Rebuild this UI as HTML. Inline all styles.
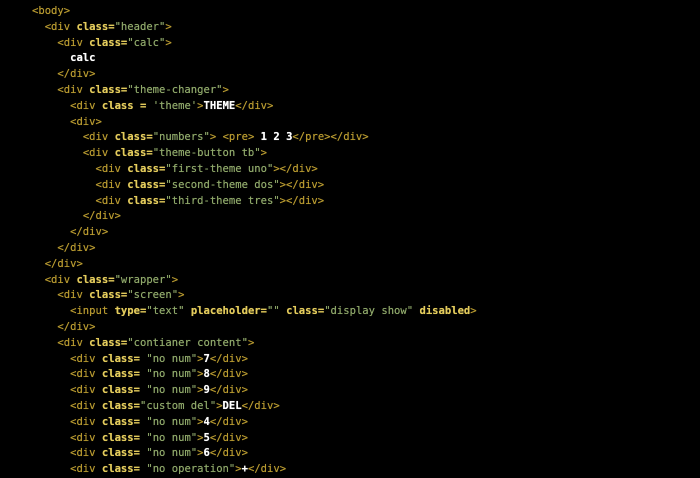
<!DOCTYPE html>
<html><head><meta charset="utf-8"><style>
html,body{margin:0;padding:0;background:#000;width:700px;height:468px;overflow:hidden}
pre{margin:0;position:absolute;left:32px;top:4px;font-family:"DejaVu Sans Mono","Liberation Mono",monospace;font-size:10.55px;line-height:15.8px;color:#fff;white-space:pre;text-shadow:0 0 0.4px currentColor}
.t{color:#b89a30}
.a{color:#e3cb5c;font-weight:bold}
.s{color:#8fa86a}
.w{color:#fff;font-weight:bold;text-shadow:0 0 0.5px #fff}
</style></head><body><pre><span class="t">&lt;body&gt;</span>
  <span class="t">&lt;div</span> <span class="a">class</span><span class="a">=</span><span class="s">"header"</span><span class="t">&gt;</span>
    <span class="t">&lt;div</span> <span class="a">class</span><span class="a">=</span><span class="s">"calc"</span><span class="t">&gt;</span>
      <span class="w">calc</span>
    <span class="t">&lt;/div&gt;</span>
    <span class="t">&lt;div</span> <span class="a">class</span><span class="a">=</span><span class="s">"theme-changer"</span><span class="t">&gt;</span>
      <span class="t">&lt;div</span> <span class="a">class</span> <span class="a">=</span> <span class="s">'theme'</span><span class="t">&gt;</span><span class="w">THEME</span><span class="t">&lt;/div&gt;</span>
      <span class="t">&lt;div&gt;</span>
        <span class="t">&lt;div</span> <span class="a">class</span><span class="a">=</span><span class="s">"numbers"</span><span class="t">&gt;</span> <span class="t">&lt;pre&gt;</span> <span class="w">1 2 3</span><span class="t">&lt;/pre&gt;&lt;/div&gt;</span>
        <span class="t">&lt;div</span> <span class="a">class</span><span class="a">=</span><span class="s">"theme-button tb"</span><span class="t">&gt;</span>
          <span class="t">&lt;div</span> <span class="a">class</span><span class="a">=</span><span class="s">"first-theme uno"</span><span class="t">&gt;&lt;/div&gt;</span>
          <span class="t">&lt;div</span> <span class="a">class</span><span class="a">=</span><span class="s">"second-theme dos"</span><span class="t">&gt;&lt;/div&gt;</span>
          <span class="t">&lt;div</span> <span class="a">class</span><span class="a">=</span><span class="s">"third-theme tres"</span><span class="t">&gt;&lt;/div&gt;</span>
        <span class="t">&lt;/div&gt;</span>
      <span class="t">&lt;/div&gt;</span>
    <span class="t">&lt;/div&gt;</span>
  <span class="t">&lt;/div&gt;</span>
  <span class="t">&lt;div</span> <span class="a">class</span><span class="a">=</span><span class="s">"wrapper"</span><span class="t">&gt;</span>
    <span class="t">&lt;div</span> <span class="a">class</span><span class="a">=</span><span class="s">"screen"</span><span class="t">&gt;</span>
      <span class="t">&lt;input</span> <span class="a">type</span><span class="a">=</span><span class="s">"text"</span> <span class="a">placeholder</span><span class="a">=</span><span class="s">""</span> <span class="a">class</span><span class="a">=</span><span class="s">"display show"</span> <span class="a">disabled</span><span class="t">&gt;</span>
    <span class="t">&lt;/div&gt;</span>
    <span class="t">&lt;div</span> <span class="a">class</span><span class="a">=</span><span class="s">"contianer content"</span><span class="t">&gt;</span>
      <span class="t">&lt;div</span> <span class="a">class</span><span class="a">=</span> <span class="s">"no num"</span><span class="t">&gt;</span><span class="w">7</span><span class="t">&lt;/div&gt;</span>
      <span class="t">&lt;div</span> <span class="a">class</span><span class="a">=</span> <span class="s">"no num"</span><span class="t">&gt;</span><span class="w">8</span><span class="t">&lt;/div&gt;</span>
      <span class="t">&lt;div</span> <span class="a">class</span><span class="a">=</span> <span class="s">"no num"</span><span class="t">&gt;</span><span class="w">9</span><span class="t">&lt;/div&gt;</span>
      <span class="t">&lt;div</span> <span class="a">class</span><span class="a">=</span><span class="s">"custom del"</span><span class="t">&gt;</span><span class="w">DEL</span><span class="t">&lt;/div&gt;</span>
      <span class="t">&lt;div</span> <span class="a">class</span><span class="a">=</span> <span class="s">"no num"</span><span class="t">&gt;</span><span class="w">4</span><span class="t">&lt;/div&gt;</span>
      <span class="t">&lt;div</span> <span class="a">class</span><span class="a">=</span> <span class="s">"no num"</span><span class="t">&gt;</span><span class="w">5</span><span class="t">&lt;/div&gt;</span>
      <span class="t">&lt;div</span> <span class="a">class</span><span class="a">=</span> <span class="s">"no num"</span><span class="t">&gt;</span><span class="w">6</span><span class="t">&lt;/div&gt;</span>
      <span class="t">&lt;div</span> <span class="a">class</span><span class="a">=</span> <span class="s">"no operation"</span><span class="t">&gt;</span><span class="w">+</span><span class="t">&lt;/div&gt;</span>
</pre></body></html>
